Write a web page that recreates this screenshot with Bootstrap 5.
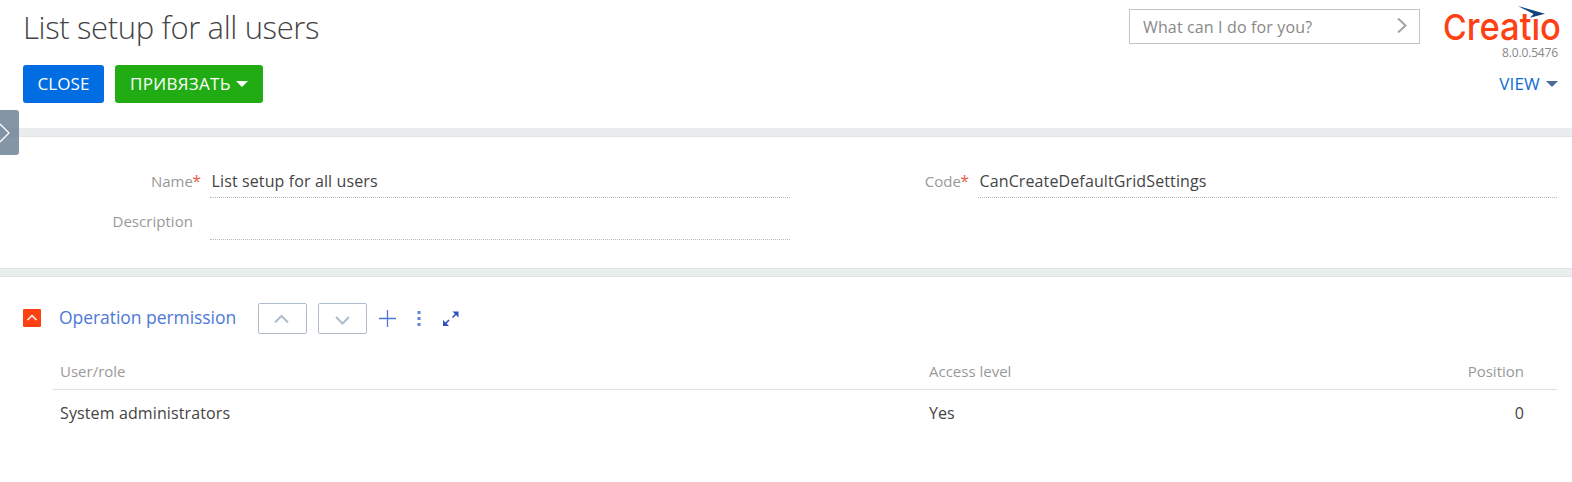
<!DOCTYPE html>
<html lang="en">
<head>
<meta charset="utf-8">
<meta name="viewport" content="width=device-width, initial-scale=1">
<title>List setup for all users</title>
<link href="https://cdn.jsdelivr.net/npm/bootstrap@5.3.0/dist/css/bootstrap.min.css" rel="stylesheet">
<style>
body{font-family:"Open Sans",sans-serif;font-size:16px;line-height:24px;color:#444;background:#fff;overflow:hidden}
.page-head{height:128px;padding:9px 14px 0 23px}
.page-title{font-size:31px;font-weight:300;line-height:36px;letter-spacing:-.36px;color:#444}
.cmd-line{width:291px;height:35px;border:1px solid #c4c4c4;padding:0 11px 0 13px;color:#888;margin-right:24px;letter-spacing:.14px}
.cmd-line svg{margin-top:-3px}
.brand-mark{width:118px;height:37px;margin:-4px 0 0 0;overflow:visible}
.brand-col{width:114px}
.version-no{font-size:12px;line-height:14px;color:#888;margin-top:4px;letter-spacing:-.15px}
.act{height:38px;border:0;border-radius:3px;padding:0 14px;font-size:17px;line-height:38px;color:#fff;letter-spacing:.1px}
.act-close{background:#006de3;width:81px}
.act-bind{background:#22ac14;width:148px;margin-left:11px;letter-spacing:.3px;padding:0 15px}
.caret-dn{width:0;height:0;border:6px solid transparent;border-top-color:currentColor;border-bottom:0}
.view-menu{color:#0d6cd6;font-size:17px;line-height:38px;letter-spacing:.2px}
.view-menu .caret-dn{color:#4a6a9c;margin-left:6px}
.band{height:9px;background:#e9eded;border-bottom:1px solid #e2e4e4}
.band-2{border-top:1px solid #e2e4e4}
.fields{height:131px;padding:32px 15px 0 23px}
.lbl{width:187px;padding-right:17px;text-align:right;font-size:15px;color:#999;letter-spacing:.04px}
.req{position:absolute;right:9px;top:0;color:#ee5b4a;font-size:16px}
.val{height:29px;line-height:24px;padding-left:1.5px;border-bottom:1px dotted #bbb;width:580px;letter-spacing:.12px}
.val-code{width:579px}
.val-2{height:30px}
.lbl-2{line-height:22px}
.detail-head{height:82px;padding:26px 0 0 23px}
.detail-title{font-size:17.5px;color:#4e78d8;margin:-3px 21px 0 18px;width:178px;line-height:30px;letter-spacing:-.05px}
.tog{width:18px;height:18px;background:#ff4013;border-radius:1px;margin-top:-1px}
.mv{width:49px;height:31px;border:1px solid #b0bccb;border-radius:2px}
.mv + .mv,.tools{margin-left:11px}
.grid-tbl{margin:0 15px 0 53px}
.grid-tbl .hd{height:31px;font-size:15px;color:#999;border-bottom:1px solid #dce0e0;line-height:24px}
.grid-tbl .rw{height:47px;line-height:47px}
.c1{width:876px;padding-left:7px}
.rw .c1{letter-spacing:.12px}
.c3{padding-right:33px}
.side-tab{position:absolute;left:0;top:110px;width:19px;height:45px;background:rgba(107,127,148,.83);border-radius:0 3px 3px 0}
</style>
</head>
<body>
<header class="page-head">
  <div class="d-flex align-items-start" style="height:56px">
    <h1 class="page-title mb-0 me-auto">List setup for all users</h1>
    <div class="cmd-line d-flex align-items-center justify-content-between"><span>What can I do for you?</span>
      <svg width="12" height="16" viewBox="0 0 12 16" fill="none" stroke="#a3a3a3" stroke-width="2"><path d="M2 1.500 9.500 8.500 2 15.500"/></svg>
    </div>
    <div class="brand-col text-end">
      <svg class="brand-mark d-block" viewBox="0 0 118 37">
        <text x="-1" y="34.500" fill="#ff4013" font-family="Inter" font-weight="500" font-size="38" textLength="118" lengthAdjust="spacingAndGlyphs"><tspan font-size="35.5">C</tspan>reatio</text>
        <path d="M86 3h13v8.500H86z" fill="#fff"/>
        <path d="M74 1 101 8.700 86 12.700 89.500 9Z" fill="#14427a"/>
      </svg>
      <div class="version-no">8.0.0.5476</div>
    </div>
  </div>
  <div class="d-flex align-items-center">
    <button class="act act-close">CLOSE</button>
    <button class="act act-bind d-flex align-items-center justify-content-between">ПРИВЯЗАТЬ<span class="caret-dn"></span></button>
    <div class="view-menu ms-auto d-flex align-items-center">VIEW<span class="caret-dn"></span></div>
  </div>
</header>
<div class="band"></div>
<section class="fields d-flex justify-content-between">
  <div>
    <div class="d-flex"><div class="lbl position-relative">Name<span class="req">*</span></div><div class="val">List setup for all users</div></div>
    <div class="d-flex" style="margin-top:12px"><div class="lbl lbl-2">Description</div><div class="val val-2"></div></div>
  </div>
  <div class="d-flex"><div class="lbl position-relative">Code<span class="req">*</span></div><div class="val val-code">CanCreateDefaultGridSettings</div></div>
</section>
<div class="band band-2"></div>
<section>
  <div class="detail-head d-flex align-items-start">
    <div class="d-flex align-items-center">
      <div class="tog d-flex"><svg width="18" height="18" fill="none" stroke="#fff" stroke-width="1.5"><path d="M4.500 11 9 6.500 13.500 11"/></svg></div>
      <div class="detail-title text-nowrap">Operation permission</div>
      <div class="mv"><svg class="d-block" width="47" height="29" fill="none" stroke="#aebccc" stroke-width="2"><path d="M16 18.500 22.500 12 29 18.500"/></svg></div>
      <div class="mv"><svg class="d-block" width="47" height="29" fill="none" stroke="#aebccc" stroke-width="2"><path d="M17 13 23.500 19.500 30 13"/></svg></div>
      <svg class="tools" width="94" height="31" viewBox="0 0 94 31">
        <path d="M1 15.500H18M9.500 7V24" stroke="#4e78d8" stroke-width="1.300"/>
        <path d="M39.500 8h3v3h-3zM39.500 14h3v3h-3zM39.500 20h3v3h-3z" fill="#5f86dd"/>
        <path d="M74.500 8.500h6v6zM65 17v6h6z" fill="#2c53b8"/><path d="M74.500 14.500 78.500 10.500M66.500 21.500 71 17" stroke="#2c53b8" stroke-width="1.600"/>
      </svg>
    </div>
  </div>
  <div class="grid-tbl">
    <div class="hd d-flex"><div class="c1">User/role</div><div>Access level</div><div class="ms-auto c3">Position</div></div>
    <div class="rw d-flex"><div class="c1">System administrators</div><div>Yes</div><div class="ms-auto c3">0</div></div>
  </div>
</section>
<div class="side-tab"><svg class="d-block" width="19" height="45" fill="none" stroke="#fff" stroke-width="1.300"><path d="M0 14 9 23 0 32"/></svg></div>
<script src="https://cdn.jsdelivr.net/npm/bootstrap@5.3.0/dist/js/bootstrap.bundle.min.js"></script>
</body>
</html>
